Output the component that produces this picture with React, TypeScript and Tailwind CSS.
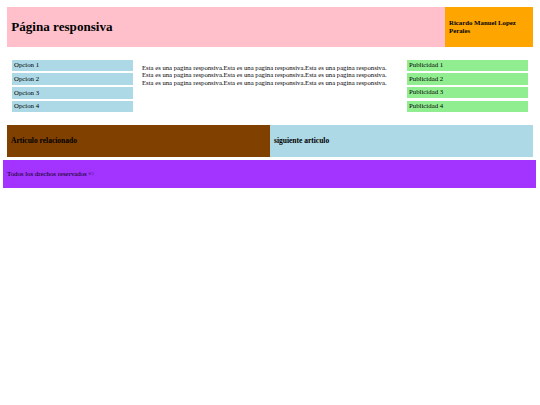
import React from "react";

export default function App() {
  const opciones = ["Opcion 1", "Opcion 2", "Opcion 3", "Opcion 4"];
  const pubs = ["Publicidad 1", "Publicidad 2", "Publicidad 3", "Publicidad 4"];
  const group = "Esta es una pagina responsiva.".repeat(3);
  return (
    <div className="w-[540px] h-[405px] bg-white pt-[7px] font-['Liberation_Serif',serif] text-black">
      <header className="ml-[6.7px] w-[526.3px] h-[40px] flex">
        <div className="flex-1 bg-[#ffc0cb] flex items-center pl-[4.6px]">
          <h1 className="text-[13.1px] font-bold leading-none">Página responsiva</h1>
        </div>
        <div className="w-[87.5px] bg-[#ffa500] flex items-center pl-[3.5px]">
          <h4 className="text-[6.8px] font-bold leading-[8px]">Ricardo Manuel Lopez<br />Perales</h4>
        </div>
      </header>
      <section className="h-[78px] flex">
        <nav className="ml-[12px] mt-[12.7px] w-[121px] flex flex-col gap-[2.5px]">
          {opciones.map((o) => (
            <div key={o} className="h-[11.3px] bg-[#add8e6] flex items-center pl-[2px] text-[6.8px] leading-none">
              {o}
            </div>
          ))}
        </nav>
        <main className="ml-[9px] mt-[16.8px] w-[256px] text-[6.7px] leading-[7.4px] flex flex-col">
          <p className="whitespace-nowrap">{group}</p>
          <p className="whitespace-nowrap">{group}</p>
          <p className="whitespace-nowrap">{group}</p>
        </main>
        <aside className="ml-[9px] mt-[12.5px] w-[121px] flex flex-col gap-[2.5px]">
          {pubs.map((p) => (
            <div key={p} className="h-[11.3px] bg-[#90ee90] flex items-center pl-[2px] text-[6.8px] leading-none">
              {p}
            </div>
          ))}
        </aside>
      </section>
      <div className="ml-[6.7px] w-[526.3px] h-[32px] flex">
        <div className="w-[263.3px] bg-[#804000] flex items-center pl-[4.3px]">
          <h3 className="text-[7.5px] font-bold leading-none">Articulo relacionado</h3>
        </div>
        <div className="flex-1 bg-[#add8e6] flex items-center pl-[4px]">
          <h3 className="text-[7.5px] font-bold leading-none">siguiente articulo</h3>
        </div>
      </div>
      <footer className="mt-[3px] ml-[3px] w-[533px] h-[28px] bg-[#a333ff] flex items-center pl-[4px] text-[6.8px] leading-none">
        Todos los drechos reservados ©
      </footer>
    </div>
  );
}
